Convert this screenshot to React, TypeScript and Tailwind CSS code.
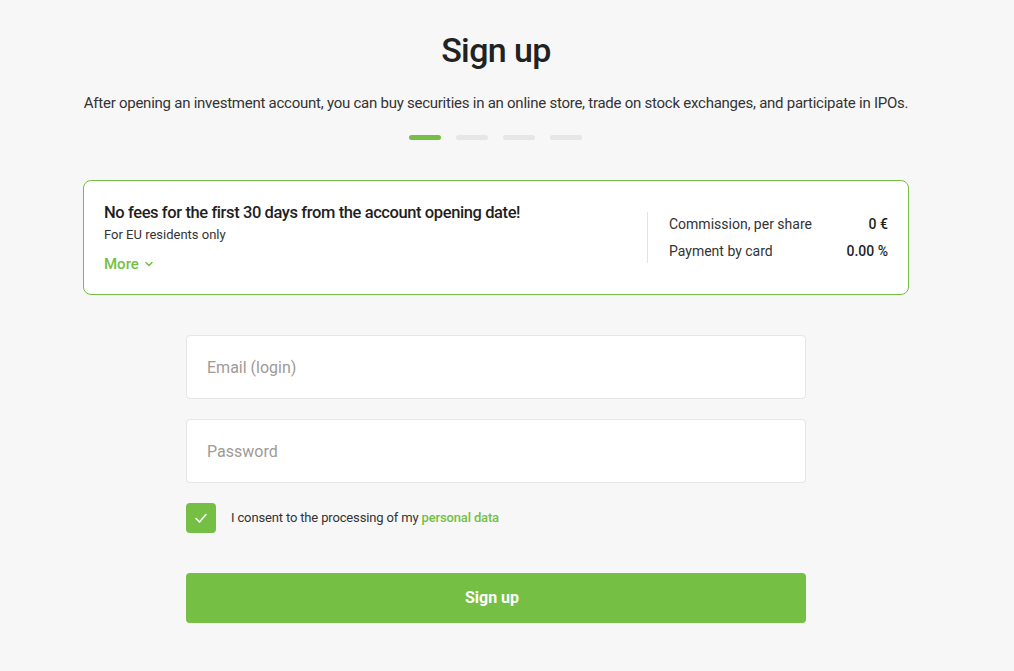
import { useState, JSX } from 'react';

export default function App(): JSX.Element {
  const [agree, setAgree] = useState<boolean>(true);

  return (
    <div
      className="min-h-screen bg-[#f7f7f7] text-[#222] flex flex-col items-center pt-[28px] pr-[22px]"
      style={{ fontFamily: 'Roboto, "Liberation Sans", sans-serif' }}
    >
      {/* Heading */}
      <h1 className="text-[34px] leading-[44px] font-medium tracking-[-0.6px]">Sign up</h1>
      <p className="mt-[21px] text-[15px] leading-[20px] text-[#333] tracking-[-0.25px]">
        After opening an investment account, you can buy securities in an online store, trade on stock exchanges, and participate in IPOs.
      </p>

      {/* Steps */}
      <div className="mt-[22px] flex gap-[15px] pr-[2px]">
        <div className="w-[32px] h-[5px] rounded-full bg-[#74bf44]" />
        <div className="w-[32px] h-[5px] rounded-full bg-[#e6e6e6]" />
        <div className="w-[32px] h-[5px] rounded-full bg-[#e6e6e6]" />
        <div className="w-[32px] h-[5px] rounded-full bg-[#e6e6e6]" />
      </div>

      {/* Promo card */}
      <div className="mt-[40px] w-[826px] h-[115px] bg-white border border-[#74bf44] rounded-[8px] flex items-center justify-between pl-[20px] pr-[20px]">
        <div className="flex flex-col pt-[2px]">
          <div className="text-[16.5px] leading-[22px] font-medium tracking-[-0.4px] text-[#1f1f1f]">
            No fees for the first 30 days from the account opening date!
          </div>
          <div className="mt-[2px] text-[13px] leading-[18px] text-[#333]">For EU residents only</div>
          <button className="mt-[9px] flex items-center gap-[5px] text-[15px] font-medium text-[#74bf44]">
            More
            <svg width="10" height="10" viewBox="0 0 10 10" fill="none">
              <path d="M2 3.5L5 6.5L8 3.5" stroke="#74bf44" strokeWidth="1.5" strokeLinecap="round" strokeLinejoin="round" />
            </svg>
          </button>
        </div>
        <div className="flex items-stretch mt-[0px]">
          <div className="w-px bg-[#e3e3e3] mr-[21px]" />
          <div className="flex flex-col gap-[7px] py-[2px] w-[219px] text-[14px] leading-[20px]">
            <div className="flex justify-between">
              <span className="text-[#333]">Commission, per share</span>
              <span className="font-medium text-[#1f1f1f]">0 €</span>
            </div>
            <div className="flex justify-between">
              <span className="text-[#333]">Payment by card</span>
              <span className="font-medium text-[#1f1f1f]">0.00 %</span>
            </div>
          </div>
        </div>
      </div>

      {/* Form */}
      <form className="mt-[40px] w-[620px] flex flex-col" onSubmit={(e) => e.preventDefault()}>
        <input
          type="email"
          placeholder="Email (login)"
          className="h-[64px] w-full bg-white border border-[#e6e6e6] rounded-[4px] px-[20px] text-[16px] outline-none placeholder:text-[#a09a96]"
        />
        <input
          type="password"
          placeholder="Password"
          className="mt-[20px] h-[64px] w-full bg-white border border-[#e6e6e6] rounded-[4px] px-[20px] text-[16px] outline-none placeholder:text-[#a09a96]"
        />
        <label className="mt-[20px] flex items-center gap-[15px] cursor-pointer">
          <span
            onClick={() => setAgree(!agree)}
            className={agree ? 'w-[30px] h-[30px] rounded-[4px] bg-[#74bf44] flex items-center justify-center' : 'w-[30px] h-[30px] rounded-[4px] bg-white border border-[#e6e6e6]'}
          >
            {agree && (
              <svg width="14" height="14" viewBox="0 0 14 14" fill="none">
                <path d="M2 7.5L5.5 11L12 3.5" stroke="white" strokeWidth="1.5" strokeLinecap="round" strokeLinejoin="round" />
              </svg>
            )}
          </span>
          <span className="text-[13px] text-[#333] tracking-[-0.15px]">
            I consent to the processing of my <span className="font-medium text-[#74bf44]">personal data</span>
          </span>
        </label>
        <button
          type="submit"
          className="mt-[40px] h-[50px] w-full rounded-[4px] bg-[#74bf44] text-white text-[16px] font-bold pr-[8px]"
        >
          Sign up
        </button>
      </form>
    </div>
  );
}
